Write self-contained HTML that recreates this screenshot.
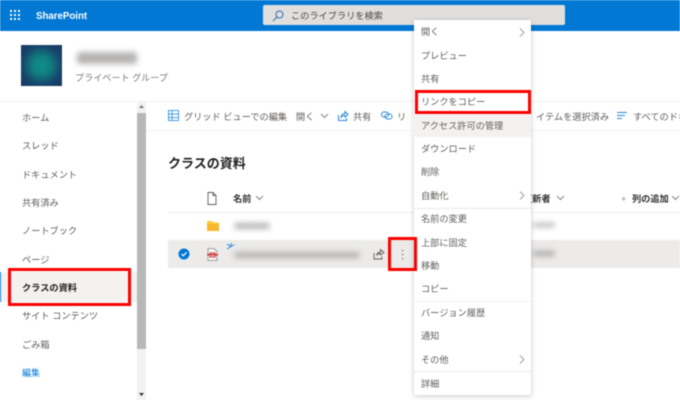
<!DOCTYPE html>
<html lang="ja">
<head>
<meta charset="utf-8">
<title>SharePoint</title>
<style>
html,body{margin:0;padding:0;background:#fff}
#p{position:relative;width:680px;height:400px;overflow:hidden;background:#fff;font-family:"Liberation Sans","Noto Sans CJK JP",sans-serif;font-size:9.2px;color:#605e5c;filter:blur(.4px)}
#p div,#p svg{position:absolute}
.t{white-space:nowrap;line-height:14px;height:14px;margin-top:2px}
.b{background:#b5b3b1;filter:blur(3px);border-radius:3px}
.r{border:3px solid #f00;box-sizing:border-box;z-index:9}
.m{left:7px;white-space:nowrap;line-height:14px;height:14px;color:#605e5c;margin-top:2px}
.h{color:#323130;font-weight:bold}
</style>
</head>
<body>
<div id="p">
<!-- top bar -->
<div style="left:0;top:0;width:680px;height:31px;background:#0078d4"></div>
<svg style="left:10px;top:10px" width="11" height="11" fill="#fff"><g><rect x="0" y="0" width="2" height="2"/><rect x="4" y="0" width="2" height="2"/><rect x="8" y="0" width="2" height="2"/><rect x="0" y="4" width="2" height="2"/><rect x="4" y="4" width="2" height="2"/><rect x="8" y="4" width="2" height="2"/><rect x="0" y="8" width="2" height="2"/><rect x="4" y="8" width="2" height="2"/><rect x="8" y="8" width="2" height="2"/></g></svg>
<div class="t" style="left:36px;top:8px;color:#fff;font-weight:bold;font-size:9.7px">SharePoint</div>
<div style="left:263px;top:5px;width:302px;height:20px;background:#e1dfdd;border-radius:2px"></div>
<svg style="left:272px;top:10px" width="12" height="12" fill="none" stroke="#2a6fb0" stroke-width="1"><circle cx="7.5" cy="4.5" r="3.5"/><path d="M5 7L1 11"/></svg>
<div class="t" style="left:291px;top:7px;color:#484644">このライブラリを検索</div>

<!-- site header -->
<div style="left:21px;top:45px;width:41px;height:41px;background:radial-gradient(circle at 50% 50%,#0f8f8a 0,#10807f 30%,#17446c 68%,#17375f 100%)"></div>
<div class="b" style="left:77px;top:52px;width:60px;height:12px"></div>
<div class="t" style="left:75px;top:69px;font-size:9.1px;color:#7a7876">プライベート グループ</div>

<!-- left nav -->
<div style="left:0;top:101px;width:680px;height:1px;background:#f3f2f1"></div>
<div style="left:137px;top:102px;width:9px;height:298px;background:#f3f2f1"></div>
<div style="left:137px;top:113px;width:9px;height:236px;background:#b8b8b8"></div>
<svg style="left:139px;top:105px" width="5" height="4"><path d="M0 3L2.5 0L5 3Z" fill="#777"/></svg>
<svg style="left:139px;top:393px" width="5" height="4"><path d="M0 0L2.5 3L5 0Z" fill="#333"/></svg>
<div class="t" style="left:22px;top:109px">ホーム</div>
<div class="t" style="left:22px;top:137px">スレッド</div>
<div class="t" style="left:22px;top:166px">ドキュメント</div>
<div class="t" style="left:22px;top:194px">共有済み</div>
<div class="t" style="left:22px;top:222px">ノートブック</div>
<div class="t" style="left:22px;top:251px">ページ</div>
<div style="left:0;top:272px;width:137px;height:30px;background:#f3f2f1"></div>
<div style="left:0;top:272px;width:1px;height:30px;background:#0078d4"></div>
<div class="t h" style="left:22px;top:279px;color:#201f1e">クラスの資料</div>
<div class="t" style="left:22px;top:307px">サイト コンテンツ</div>
<div class="t" style="left:22px;top:336px">ごみ箱</div>
<div class="t" style="left:22px;top:364px;color:#0078d4;font-size:9px">編集</div>
<div class="r" style="left:8px;top:268px;width:123px;height:38px"></div>

<!-- command bar -->
<div style="left:146px;top:130px;width:534px;height:1px;background:#f3f2f1"></div>
<svg style="left:168px;top:110px" width="12" height="12" fill="none" stroke="#4a9ee0" stroke-width="1"><rect x=".5" y=".5" width="10" height="10"/><path d="M.5 4h10M.5 7.5h10M4 .5v10"/></svg>
<div class="t" style="left:184px;top:108px">グリッド ビューでの編集</div>
<div class="t" style="left:296px;top:108px">開く</div>
<svg style="left:320px;top:113px" width="9" height="6" fill="none" stroke="#8a8886"><path d="M1 1L4.5 4.5L8 1"/></svg>
<svg style="left:337px;top:110px" width="12" height="12" fill="none" stroke="#2b88d8"><path d="M1.5 5v5.5h8V8M4 7c.5-2 2-3.500 4-3.500V1.500L11 4.500L8 7V5.500C6.500 5.500 5 6 4 7Z"/></svg>
<div class="t" style="left:353px;top:108px">共有</div>
<svg style="left:381px;top:111px" width="12" height="9" fill="none" stroke="#2b88d8"><rect x=".5" y="1" width="7" height="5" rx="2.500"/><rect x="4" y="3" width="7" height="5" rx="2.500"/></svg>
<div class="t" style="left:397px;top:108px">リ</div>
<div class="t" style="left:536px;top:108px">イテムを選択済み</div>
<svg style="left:617px;top:111px" width="11" height="9" stroke="#2b88d8"><path d="M0 1.500h10M0 4.500h8M0 7.500h5"/></svg>
<div class="t" style="left:633px;top:108px">すべてのドキュメント</div>

<!-- heading + list -->
<div class="t" style="left:168px;top:155px;font-size:13px;font-weight:bold;color:#201f1e">クラスの資料</div>
<svg style="left:207px;top:192px" width="10" height="13" fill="none" stroke="#605e5c" stroke-width=".9"><path d="M1 .5h5l3 3v9H1zM6 .5v3h3"/></svg>
<div class="t h" style="left:233px;top:190px">名前</div>
<svg style="left:255px;top:195px" width="9" height="6" fill="none" stroke="#8a8886"><path d="M1 1L4.500 4.500L8 1"/></svg>
<div class="t h" style="left:523px;top:190px">更新者</div>
<svg style="left:556px;top:195px" width="9" height="6" fill="none" stroke="#8a8886"><path d="M1 1L4.500 4.500L8 1"/></svg>
<div class="t" style="left:621px;top:190px;color:#8a8886">+</div>
<div class="t h" style="left:632px;top:190px">列の追加</div>
<svg style="left:671px;top:195px" width="9" height="6" fill="none" stroke="#8a8886"><path d="M1 1L4.500 4.500L8 1"/></svg>
<div style="left:168px;top:212px;width:512px;height:1px;background:#f3f2f1"></div>
<svg style="left:207px;top:221px" width="13" height="11"><path d="M0 0h5l1.500 1.500H12V10H0z" fill="#ffc83d"/><path d="M0 3h12v7H0z" fill="#f5b82e"/></svg>
<div class="b" style="left:234px;top:223px;width:36px;height:6px"></div>
<div class="b" style="left:533px;top:223px;width:22px;height:4px"></div>
<div style="left:168px;top:240px;width:512px;height:28px;background:#edebe9"></div>
<svg style="left:178px;top:248px" width="12" height="12"><circle cx="6" cy="6" r="5.500" fill="#0078d4"/><path d="M3.500 6L5.300 7.800L8.500 4.300" fill="none" stroke="#fff" stroke-width="1.200"/></svg>
<svg style="left:207px;top:248px" width="11" height="13"><path d="M1 .5h6l3 3v9H1z" fill="#f7f5f3" stroke="#8a8886" stroke-width=".8"/><rect x="0" y="6" width="11" height="1.500" fill="#d13438"/><rect x="3" y="5" width="5" height="4" fill="none" stroke="#d13438"/></svg>
<svg style="left:227px;top:243px" width="8" height="8" stroke="#2b88d8" fill="none"><path d="M4 0v3.500L0 1M4 3.500L7.500 1.500M4 3.500L0 6"/></svg>
<div class="b" style="left:234px;top:252px;width:126px;height:6px"></div>
<div class="b" style="left:533px;top:251px;width:22px;height:5px;background:#a8a6a4"></div>
<svg style="left:373px;top:248px" width="12" height="12" fill="none" stroke="#605e5c" stroke-width=".9"><path d="M1 5v6h8V8.500M3.500 7.500c.5-2 2-3.500 4-3.500V1.500L11 4.500L7.500 7V5.500C6 5.500 4.500 6 3.500 7.500Z"/></svg>
<svg style="left:401px;top:249px" width="3" height="12" fill="#605e5c"><rect x="1" y="1" width="1.200" height="1.200"/><rect x="1" y="5" width="1.200" height="1.200"/><rect x="1" y="9" width="1.200" height="1.200"/></svg>
<div class="r" style="left:388px;top:237px;width:29px;height:34px"></div>

<!-- context menu -->
<div style="left:414px;top:20px;width:117px;height:375px;background:#fff;box-shadow:0 1px 5px rgba(0,0,0,.22);z-index:5">
<div style="left:-3px;top:95px;width:120px;height:22px;background:#f3f2f1"></div>
<div style="left:0;top:188px;width:117px;height:1px;background:#edebe9"></div>
<div style="left:0;top:281px;width:117px;height:1px;background:#f3f2f1"></div>
<div style="left:0;top:351px;width:117px;height:1px;background:#edebe9"></div>
<div class="m" style="top:3px">開く</div>
<div class="m" style="top:27px">プレビュー</div>
<div class="m" style="top:50px">共有</div>
<div class="m" style="top:73px">リンクをコピー</div>
<div class="m" style="top:97px">アクセス許可の管理</div>
<div class="m" style="top:120px">ダウンロード</div>
<div class="m" style="top:143px">削除</div>
<div class="m" style="top:167px">自動化</div>
<div class="m" style="top:190px">名前の変更</div>
<div class="m" style="top:214px">上部に固定</div>
<div class="m" style="top:237px">移動</div>
<div class="m" style="top:260px">コピー</div>
<div class="m" style="top:284px">バージョン履歴</div>
<div class="m" style="top:307px">通知</div>
<div class="m" style="top:331px">その他</div>
<div class="m" style="top:355px">詳細</div>
<svg style="left:105px;top:8px" width="6" height="9" fill="none" stroke="#a19f9d"><path d="M1 .5L5 4.500L1 8.500"/></svg>
<svg style="left:105px;top:171px" width="6" height="9" fill="none" stroke="#a19f9d"><path d="M1 .5L5 4.500L1 8.500"/></svg>
<svg style="left:105px;top:335px" width="6" height="9" fill="none" stroke="#a19f9d"><path d="M1 .5L5 4.500L1 8.500"/></svg>
</div>
<div class="r" style="left:415px;top:90px;width:116px;height:24px"></div>
</div>
</body>
</html>
